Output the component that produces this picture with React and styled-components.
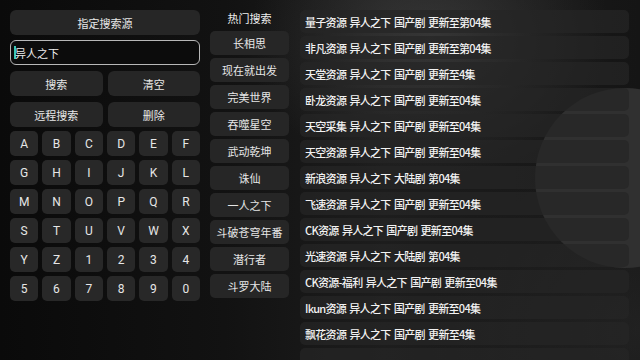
import React from 'react';
import styled, { createGlobalStyle } from 'styled-components';

const GlobalStyle = createGlobalStyle`
  html, body {
    margin: 0;
    padding: 0;
    background: #0b0b0b;
  }
  body {
    font-family: "Noto Sans CJK SC", "Noto Sans", sans-serif;
    color: #e6e6e6;
  }
`;

const keys = [
  'A', 'B', 'C', 'D', 'E', 'F',
  'G', 'H', 'I', 'J', 'K', 'L',
  'M', 'N', 'O', 'P', 'Q', 'R',
  'S', 'T', 'U', 'V', 'W', 'X',
  'Y', 'Z', '1', '2', '3', '4',
  '5', '6', '7', '8', '9', '0',
];

const hot = ['长相思', '现在就出发', '完美世界', '吞噬星空', '武动乾坤', '诛仙', '一人之下', '斗破苍穹年番', '潜行者', '斗罗大陆'];

const results = [
  '量子资源 异人之下 国产剧 更新至第04集',
  '非凡资源 异人之下 国产剧 更新至第04集',
  '天堂资源 异人之下 国产剧 更新至4集',
  '卧龙资源 异人之下 国产剧 更新至04集',
  '天空采集 异人之下 国产剧 更新至04集',
  '天空资源 异人之下 国产剧 更新至04集',
  '新浪资源 异人之下 大陆剧 第04集',
  '飞速资源 异人之下 国产剧 更新至04集',
  'CK资源 异人之下 国产剧 更新至04集',
  '光速资源 异人之下 大陆剧 第04集',
  'CK资源-福利 异人之下 国产剧 更新至04集',
  'Ikun资源 异人之下 国产剧 更新至04集',
  '飘花资源 异人之下 国产剧 更新至4集',
  '',
];

export default function App() {
  return (
    <>
      <GlobalStyle />
      <Screen>
        <Backdrop />
        <LeftPanel>
          <WideButton>指定搜索源</WideButton>
          <SearchInput>
            <Caret />
            异人之下
          </SearchInput>
          <ButtonPair>
            <WideButton>搜索</WideButton>
            <WideButton>清空</WideButton>
          </ButtonPair>
          <ButtonPair>
            <WideButton>远程搜索</WideButton>
            <WideButton>删除</WideButton>
          </ButtonPair>
          <KeyGrid>
            {keys.map(k => (
              <Key key={k}>{k}</Key>
            ))}
          </KeyGrid>
        </LeftPanel>
        <HotPanel>
          <HotTitle>热门搜索</HotTitle>
          {hot.map(h => (
            <HotItem key={h}>{h}</HotItem>
          ))}
        </HotPanel>
        <ResultList>
          {results.map((r, i) => (
            <ResultRow key={i}>{r}</ResultRow>
          ))}
        </ResultList>
      </Screen>
    </>
  );
}

const Screen = styled.div`
  position: relative;
  width: 640px;
  height: 360px;
  overflow: hidden;
  display: flex;
  align-items: flex-start;
  padding: 10px 11px 0 10px;
  box-sizing: border-box;
  background:
    radial-gradient(ellipse 260px 200px at 430px 40px, rgba(80, 80, 80, 0.5), transparent 70%),
    radial-gradient(ellipse 300px 260px at 640px 330px, rgba(45, 45, 45, 0.5), transparent 70%),
    linear-gradient(90deg, #0a0a0a 0%, #121212 35%, #1d1d1d 60%, #151515 100%);
`;

const Backdrop = styled.div`
  position: absolute;
  left: 535px;
  top: 88px;
  width: 180px;
  height: 180px;
  border-radius: 50%;
  background: #303030;
  pointer-events: none;
`;

const LeftPanel = styled.div`
  position: relative;
  width: 190px;
  display: flex;
  flex-direction: column;
`;

const WideButton = styled.div`
  height: 25px;
  border-radius: 6px;
  background: #262626;
  display: flex;
  align-items: center;
  justify-content: center;
  font-size: 11px;
  color: #e8e8e8;
`;

const SearchInput = styled.div`
  height: 25px;
  margin-top: 5px;
  border: 1px solid #b8b8b8;
  border-radius: 6px;
  background: #0c0c0c;
  display: flex;
  align-items: center;
  padding-left: 3px;
  font-size: 11px;
  color: #eeeeee;
  box-sizing: border-box;
`;

const Caret = styled.span`
  width: 2px;
  height: 13px;
  background: #3cc9b4;
  margin-right: -1px;
`;

const ButtonPair = styled.div`
  display: grid;
  grid-template-columns: 1fr 1fr;
  gap: 5px;
  margin-top: 6px;
`;

const KeyGrid = styled.div`
  display: grid;
  grid-template-columns: repeat(6, 1fr);
  column-gap: 4px;
  row-gap: 4px;
  margin-top: 4px;
`;

const Key = styled.div`
  height: 25px;
  border-radius: 5px;
  background: #282828;
  display: flex;
  align-items: center;
  justify-content: center;
  font-family: Roboto, "Noto Sans", sans-serif;
  font-size: 12px;
  color: #e6e6e6;
`;

const HotPanel = styled.div`
  position: relative;
  width: 79px;
  margin-left: 10px;
  display: flex;
  flex-direction: column;
  gap: 3px;
`;

const HotTitle = styled.div`
  height: 18px;
  padding-bottom: 3px;
  box-sizing: border-box;
  display: flex;
  align-items: center;
  justify-content: center;
  font-size: 11px;
  color: #eeeeee;
`;

const HotItem = styled.div`
  height: 24px;
  border-radius: 5px;
  background: #262626;
  display: flex;
  align-items: center;
  justify-content: center;
  font-size: 11px;
  color: #e6e6e6;
  white-space: nowrap;
`;

const ResultList = styled.div`
  position: relative;
  flex: 1;
  margin-left: 11px;
  display: flex;
  flex-direction: column;
  gap: 3px;
`;

const ResultRow = styled.div`
  flex: none;
  height: 23px;
  border-radius: 5px;
  background: rgba(38, 38, 38, 0.72);
  display: flex;
  align-items: center;
  padding-left: 5px;
  font-size: 11px;
  font-weight: 500;
  letter-spacing: -0.7px;
  word-spacing: 1.5px;
  color: #f2f2f2;
  white-space: nowrap;
`;
